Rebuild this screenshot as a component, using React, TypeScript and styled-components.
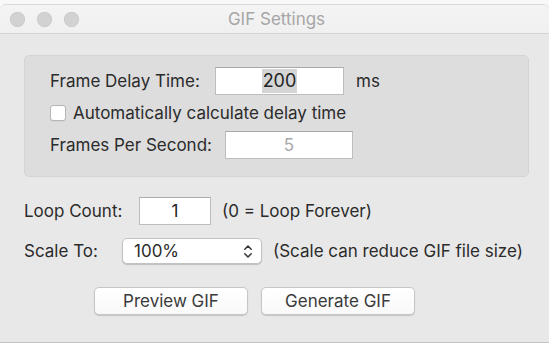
import styled, { createGlobalStyle } from "styled-components";
import { FC } from "react";

const GlobalStyle = createGlobalStyle`
  html, body {
    margin: 0;
    padding: 0;
    background: #f8f8f8;
  }
  body {
    font-family: Inter, "Liberation Sans", sans-serif;
    font-size: 17px;
    color: #2b2b2b;
  }
`;

const ChevronUpDown: FC = () => (
  <svg width="10" height="15" viewBox="0 0 10 15" fill="none">
    <path d="M1.8 5.2 L5 2 L8.2 5.2" stroke="#333" strokeWidth="1.5" strokeLinecap="round" strokeLinejoin="round" />
    <path d="M1.8 9.8 L5 13 L8.2 9.8" stroke="#333" strokeWidth="1.5" strokeLinecap="round" strokeLinejoin="round" />
  </svg>
);

const App: FC = () => {
  return (
    <>
      <GlobalStyle />
      <Window>
        <TitleBar>
          <Lights>
            <Light />
            <Light />
            <Light />
          </Lights>
          <Title>GIF Settings</Title>
        </TitleBar>
        <Content>
          <GroupBox>
            <Row>
              <Label $width={165}>Frame Delay Time:</Label>
              <TextField $width={129}>
                <Selected>200</Selected>
              </TextField>
              <Note $gap={12}>ms</Note>
            </Row>
            <CheckRow>
              <Checkbox />
              <span>Automatically calculate delay time</span>
            </CheckRow>
            <Row>
              <Label $width={175}>Frames Per Second:</Label>
              <TextField $width={128} $disabled>
                5
              </TextField>
            </Row>
          </GroupBox>
          <LoopRow>
            <Label $width={115}>Loop Count:</Label>
            <TextField $width={72}>1</TextField>
            <Note $gap={11}>(0 = Loop Forever)</Note>
          </LoopRow>
          <ScaleRow>
            <Label $width={98}>Scale To:</Label>
            <Select>
              <span>100%</span>
              <ChevronUpDown />
            </Select>
            <Note $gap={11}>(Scale can reduce GIF file size)</Note>
          </ScaleRow>
          <Buttons>
            <Button>Preview GIF</Button>
            <Button>Generate GIF</Button>
          </Buttons>
        </Content>
      </Window>
    </>
  );
};

const Window = styled.div`
  margin-top: 4px;
  height: 339px;
  box-sizing: border-box;
  background: #e8e8e8;
  border-top: 1px solid #d9d9d9;
  border-bottom: 1px solid #c4c4c4;
  border-radius: 6px 6px 0 0;
  overflow: hidden;
`;

const TitleBar = styled.div`
  position: relative;
  height: 28px;
  display: flex;
  align-items: center;
  justify-content: center;
  background: linear-gradient(#f4f4f4, #f0f0f0);
  border-bottom: 1px solid #d3d3d3;
`;

const Lights = styled.div`
  position: absolute;
  left: 10px;
  top: 7px;
  display: flex;
  gap: 12px;
`;

const Light = styled.div`
  width: 15px;
  height: 15px;
  border-radius: 50%;
  background: #d2d2d2;
  box-shadow: inset 0 0 0 0.5px #c6c6c6;
`;

const Title = styled.div`
  font-size: 17px;
  color: #a6a6a6;
  padding-left: 4px;
`;

const Content = styled.div`
  padding: 21px 20px 0 24px;
  display: flex;
  flex-direction: column;
`;

const GroupBox = styled.div`
  box-sizing: border-box;
  height: 122px;
  padding: 11px 0 0 25px;
  background: #dddddd;
  border: 1px solid #d4d4d4;
  border-radius: 5px;
  display: flex;
  flex-direction: column;
  gap: 9px;
`;

const Row = styled.div`
  display: flex;
  align-items: center;
  height: 28px;
`;

const CheckRow = styled.div`
  display: flex;
  align-items: center;
  height: 18px;
  gap: 7px;
`;

const Checkbox = styled.div`
  width: 16px;
  height: 16px;
  box-sizing: border-box;
  background: #fff;
  border: 1px solid #b4b4b4;
  border-radius: 3px;
  box-shadow: 0 0.5px 0 rgba(0, 0, 0, 0.08);
`;

const Label = styled.span<{ $width: number }>`
  width: ${(p) => p.$width}px;
  flex-shrink: 0;
  white-space: nowrap;
`;

const TextField = styled.div<{ $width: number; $disabled?: boolean }>`
  box-sizing: border-box;
  width: ${(p) => p.$width}px;
  height: 28px;
  display: flex;
  align-items: center;
  justify-content: center;
  background: #fff;
  border: 1px solid #bdbdbd;
  border-top-color: #a9a9a9;
  color: ${(p) => (p.$disabled ? "#a8a8a8" : "#222")};
  font-size: 17px;
`;

const Selected = styled.span`
  background: #d5d5d5;
  padding: 0 1px;
  line-height: 24px;
  font-size: 18px;
`;

const Note = styled.span<{ $gap: number }>`
  margin-left: ${(p) => p.$gap}px;
  white-space: nowrap;
`;

const LoopRow = styled(Row)`
  margin-top: 20px;
`;

const ScaleRow = styled(Row)`
  margin-top: 13px;
  height: 26px;
`;

const Select = styled.div`
  box-sizing: border-box;
  width: 140px;
  height: 26px;
  padding: 0 8px 0 11px;
  display: flex;
  align-items: center;
  justify-content: space-between;
  background: #fff;
  border: 0.5px solid #c2c2c2;
  border-radius: 5px;
  box-shadow: 0 1px 1px rgba(0, 0, 0, 0.18);
`;

const Buttons = styled.div`
  margin: 23px 0 0 70px;
  display: flex;
  gap: 13px;
`;

const Button = styled.button`
  box-sizing: border-box;
  width: 154px;
  height: 28px;
  font-family: inherit;
  font-size: 17px;
  color: #3a3a3a;
  background: linear-gradient(#ffffff, #f9f9f9);
  border: 0.5px solid #c6c6c6;
  border-radius: 5px;
  box-shadow: 0 1px 1px rgba(0, 0, 0, 0.16);
  padding: 0;
`;

export default App;
